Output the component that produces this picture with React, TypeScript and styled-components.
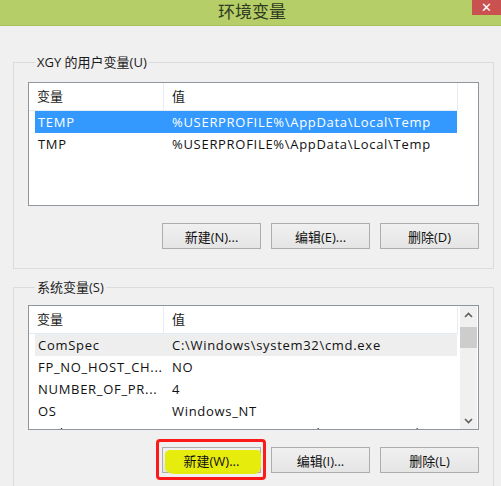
import React from "react";
import styled, { createGlobalStyle } from "styled-components";

const Global = createGlobalStyle`
  html, body { margin: 0; padding: 0; background: #f0f0f0; }
  body { width: 501px; height: 486px; overflow: hidden; font-family: "Open Sans", "Noto Sans CJK SC", sans-serif; font-size: 13px; color: #000; }
  * { box-sizing: border-box; }
`;

const Window = styled.div`
  width: 501px;
  height: 486px;
  overflow: hidden;
  background: #f0f0f0;
  display: flex;
  flex-direction: column;
`;

const TitleBar = styled.div`
  height: 26px;
  flex: none;
  background: #b6ce67;
  border-bottom: 1px solid #a9c05a;
  display: grid;
  grid-template-columns: 1fr auto 1fr;
  align-items: start;
`;

const Title = styled.div`
  grid-column: 2;
  font-family: "Noto Sans CJK SC", sans-serif;
  font-size: 17px;
  line-height: 21px;
  color: #2f3a22;
  padding-left: 3px;
`;

const CloseButton = styled.div`
  grid-column: 3;
  justify-self: end;
  width: 29px;
  height: 15px;
  background: #c95150;
  color: #fff;
  display: flex;
  align-items: center;
  justify-content: center;
  font-family: "DejaVu Sans", sans-serif;
  font-size: 13px;
  line-height: 15px;
  font-weight: bold;
`;

const Body = styled.div`
  padding: 27px 7px 0 13px;
  display: flex;
  flex-direction: column;
  gap: 9px;
`;

const Group = styled.fieldset<{ $pt: number; $pb: number }>`
  margin: 0;
  min-inline-size: 0;
  border: 1px solid #dcdcdc;
  padding: ${(p) => p.$pt}px 14px ${(p) => p.$pb}px 14px;
  display: flex;
  flex-direction: column;
`;

const Legend = styled.legend`
  margin-left: 7px;
  padding: 0 2px;
  line-height: 18px;
  font-size: 13px;
  color: #1a1a1a;
`;

const ListBox = styled.div<{ $h: number }>`
  height: ${(p) => p.$h}px;
  border: 1px solid #8f959c;
  background: #fff;
  display: flex;
  overflow: hidden;
`;

const ListContent = styled.div`
  width: 429px;
  flex: none;
  display: flex;
  flex-direction: column;
  overflow: hidden;
`;

const ListHeader = styled.div`
  height: 28px;
  flex: none;
  display: flex;
  border-bottom: 1px solid #e3ebf5;
`;

const HeaderCell = styled.div<{ $w?: number }>`
  ${(p) => (p.$w ? `width: ${p.$w}px; flex: none;` : "flex: 1;")}
  padding-left: 8px;
  line-height: 27px;
  border-right: 1px solid #e8edf3;
  color: #1a1a1a;
`;

const Row = styled.div<{ $state?: "selected" | "hover" }>`
  margin-left: 6px;
  width: 422px;
  height: 22px;
  flex: none;
  display: flex;
  line-height: 22px;
  letter-spacing: 0.7px;
  background: ${(p) =>
    p.$state === "selected" ? "#3399ff" : p.$state === "hover" ? "#eeeeee" : "transparent"};
  color: ${(p) => (p.$state === "selected" ? "#ffffff" : "#111")};
  white-space: nowrap;
`;

const NameCell = styled.div`
  width: 128px;
  flex: none;
  padding-left: 3px;
  overflow: hidden;
`;

const ValueCell = styled.div`
  flex: 1;
  padding-left: 9px;
  overflow: hidden;
`;

const Scrollbar = styled.div`
  margin-left: auto;
  margin-right: 1px;
  width: 17px;
  flex: none;
  background: #f0f0f0;
  display: flex;
  flex-direction: column;
  align-items: center;
`;

const ScrollArrow = styled.div`
  height: 17px;
  width: 17px;
  display: flex;
  align-items: center;
  justify-content: center;
  flex: none;
`;

const Thumb = styled.div`
  width: 17px;
  height: 21px;
  background: #cdcdcd;
  margin-top: 4px;
`;

const ScrollTrack = styled.div`
  flex: 1;
  width: 100%;
`;

const ButtonRow = styled.div<{ $mt: number }>`
  margin-top: ${(p) => p.$mt}px;
  display: flex;
  justify-content: flex-end;
  gap: 10px;
`;

const Button = styled.div`
  position: relative;
  width: 99px;
  height: 26px;
  border: 1px solid #adadad;
  background: linear-gradient(#f0f0f0, #e5e5e5);
  display: flex;
  align-items: center;
  justify-content: center;
  font-size: 13px;
  color: #111;
`;

const ButtonLabel = styled.span`
  position: relative;
  z-index: 2;
`;

const Highlighter = styled.div`
  position: absolute;
  left: 2px;
  right: -1px;
  top: 2px;
  bottom: -2px;
  background: #e6ec00;
  border-radius: 6px 3px 7px 10px / 4px 6px 8px 6px;
  opacity: 0.95;
  z-index: 1;
`;

const RedBox = styled.div`
  position: absolute;
  left: -7px;
  right: -6px;
  top: -9px;
  bottom: -8px;
  border: 3px solid #fb1b1b;
  border-radius: 4px;
  z-index: 3;
`;

const Chevron = ({ up }: { up?: boolean }) => (
  <svg width="9" height="6" viewBox="0 0 9 6">
    <path
      d={up ? "M1 5 L4.5 1.5 L8 5" : "M1 1 L4.5 4.5 L8 1"}
      fill="none"
      stroke="#5f5f5f"
      strokeWidth="1.6"
    />
  </svg>
);

type Item = { name: string; value: string; state?: "selected" | "hover" };

const userVars: Item[] = [
  { name: "TEMP", value: "%USERPROFILE%\\AppData\\Local\\Temp", state: "selected" },
  { name: "TMP", value: "%USERPROFILE%\\AppData\\Local\\Temp" },
];

const sysVars: Item[] = [
  { name: "ComSpec", value: "C:\\Windows\\system32\\cmd.exe", state: "hover" },
  { name: "FP_NO_HOST_CH...", value: "NO" },
  { name: "NUMBER_OF_PR...", value: "4" },
  { name: "OS", value: "Windows_NT" },
  { name: "Path", value: "C:\\ProgramData\\Oracle\\Java\\javapath;C:\\Windows\\system32" },
];

const VarList = ({ items, height, scroll }: { items: Item[]; height: number; scroll?: boolean }) => (
  <ListBox $h={height}>
    <ListContent>
      <ListHeader>
        <HeaderCell $w={135}>变量</HeaderCell>
        <HeaderCell>值</HeaderCell>
      </ListHeader>
      {items.map((it) => (
        <Row key={it.name} $state={it.state}>
          <NameCell>{it.name}</NameCell>
          <ValueCell>{it.value}</ValueCell>
        </Row>
      ))}
    </ListContent>
    {scroll && (
      <Scrollbar>
        <ScrollArrow>
          <Chevron up />
        </ScrollArrow>
        <Thumb />
        <ScrollTrack />
        <ScrollArrow>
          <Chevron />
        </ScrollArrow>
      </Scrollbar>
    )}
  </ListBox>
);

export default function App() {
  return (
    <>
      <Global />
      <Window>
        <TitleBar>
          <Title>环境变量</Title>
          <CloseButton>✕</CloseButton>
        </TitleBar>
        <Body>
          <Group $pt={11} $pb={19}>
            <Legend>XGY 的用户变量(U)</Legend>
            <VarList items={userVars} height={124} />
            <ButtonRow $mt={17}>
              <Button>新建(N)...</Button>
              <Button>编辑(E)...</Button>
              <Button>删除(D)</Button>
            </ButtonRow>
          </Group>
          <Group $pt={9} $pb={40}>
            <Legend>系统变量(S)</Legend>
            <VarList items={sysVars} height={125} scroll />
            <ButtonRow $mt={17}>
              <Button>
                <Highlighter />
                <ButtonLabel>新建(W)...</ButtonLabel>
                <RedBox />
              </Button>
              <Button>编辑(I)...</Button>
              <Button>删除(L)</Button>
            </ButtonRow>
          </Group>
        </Body>
      </Window>
    </>
  );
}
